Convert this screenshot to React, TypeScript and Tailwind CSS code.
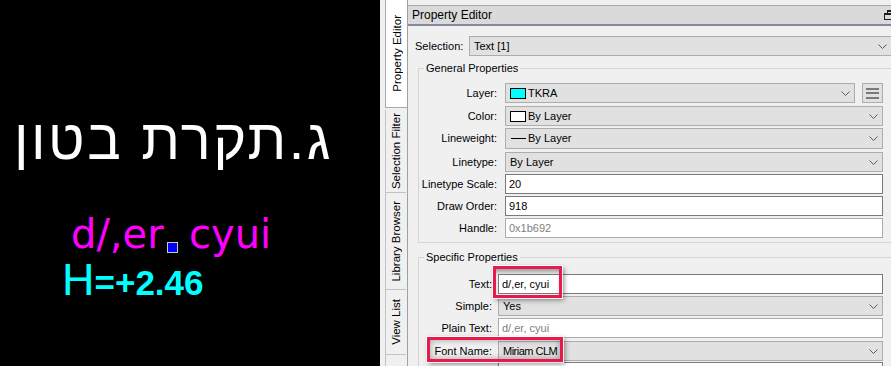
import React from 'react';

type Row = {
  label: string;
  mt: string;
  h: string;
  control: React.ReactNode;
};

function Chevron() {
  return (
    <svg width="9" height="5" viewBox="0 0 9 5" className="shrink-0">
      <polyline points="0.5,0.5 4.5,4.5 8.5,0.5" fill="none" stroke="#5a5a5a" strokeWidth="1" />
    </svg>
  );
}

function Combo({ children, className = '' }: { children: React.ReactNode; className?: string }) {
  return (
    <div className={`flex h-[20px] items-center border border-[#adadad] bg-[#e1e1e1] pl-[4px] pr-[4px] ${className}`}>
      <div className="flex min-w-0 flex-1 items-center gap-[2px] whitespace-nowrap">{children}</div>
      <Chevron />
    </div>
  );
}

function Field({ value, muted = false, className = '' }: { value?: string; muted?: boolean; className?: string }) {
  return (
    <div
      className={`flex h-[20px] items-center whitespace-nowrap border bg-white px-[3px] ${
        muted ? 'border-[#ababab] text-[#808080]' : 'border-[#7a7a7a] text-black'
      } ${className}`}
    >
      {value}
    </div>
  );
}

function Swatch({ color }: { color: string }) {
  return <span className={`h-[11px] w-[16px] shrink-0 border border-black ${color}`} />;
}

function MenuButton() {
  return (
    <div className="ml-[7px] flex h-[20px] w-[21px] flex-col items-center justify-center gap-[2.5px] border border-[#adadad] bg-[#e1e1e1]">
      <span className="h-[2px] w-[13px] bg-[#7a7a7a]" />
      <span className="h-[2px] w-[13px] bg-[#7a7a7a]" />
      <span className="h-[2px] w-[13px] bg-[#7a7a7a]" />
    </div>
  );
}

function RestoreIcon() {
  return (
    <svg width="11" height="10" viewBox="0 0 11 10" className="mr-[-4px] shrink-0">
      <rect x="3.5" y="0.5" width="7" height="5" fill="none" stroke="#1c1c1c" />
      <line x1="3.5" y1="1.5" x2="10.5" y2="1.5" stroke="#1c1c1c" />
      <rect x="0.5" y="3.5" width="7" height="6" fill="#dadada" stroke="#1c1c1c" />
      <line x1="0.5" y1="4.5" x2="7.5" y2="4.5" stroke="#1c1c1c" />
    </svg>
  );
}

const general: Row[] = [
  {
    label: 'Layer:',
    mt: 'mt-0',
    h: 'h-[20px]',
    control: (
      <div className="flex">
        <Combo className="w-[350px]">
          <Swatch color="bg-[#00ffff]" />
          <span>TKRA</span>
        </Combo>
        <MenuButton />
      </div>
    ),
  },
  {
    label: 'Color:',
    mt: 'mt-[3px]',
    h: 'h-[20px]',
    control: (
      <Combo className="w-[378px]">
        <Swatch color="bg-white" />
        <span>By Layer</span>
      </Combo>
    ),
  },
  {
    label: 'Lineweight:',
    mt: 'mt-[2px]',
    h: 'h-[21px]',
    control: (
      <Combo className="h-[21px] w-[378px]">
        <span className="ml-[1px] h-px w-[15px] bg-black" />
        <span>By Layer</span>
      </Combo>
    ),
  },
  {
    label: 'Linetype:',
    mt: 'mt-[3px]',
    h: 'h-[20px]',
    control: (
      <Combo className="w-[378px]">
        <span>By Layer</span>
      </Combo>
    ),
  },
  { label: 'Linetype Scale:', mt: 'mt-[2px]', h: 'h-[20px]', control: <Field value="20" className="w-[378px]" /> },
  { label: 'Draw Order:', mt: 'mt-[2px]', h: 'h-[20px]', control: <Field value="918" className="w-[378px]" /> },
  { label: 'Handle:', mt: 'mt-[2px]', h: 'h-[20px]', control: <Field value="0x1b692" muted className="w-[378px]" /> },
];

const specific: Row[] = [
  { label: 'Text:', mt: 'mt-0', h: 'h-[20px]', control: <Field value="d/,er, cyui" className="w-[385px]" /> },
  {
    label: 'Simple:',
    mt: 'mt-[2px]',
    h: 'h-[20px]',
    control: (
      <Combo className="w-[385px]">
        <span>Yes</span>
      </Combo>
    ),
  },
  { label: 'Plain Text:', mt: 'mt-[2px]', h: 'h-[20px]', control: <Field value="d/,er, cyui" muted className="w-[385px]" /> },
  {
    label: 'Font Name:',
    mt: 'mt-[3px]',
    h: 'h-[20px]',
    control: (
      <Combo className="w-[385px]">
        <span className="tracking-[-0.5px]">Miriam CLM</span>
      </Combo>
    ),
  },
  { label: '', mt: 'mt-px', h: 'h-[20px]', control: <Field className="w-[385px]" /> },
];

function DrawingArea() {
  return (
    <div className="relative w-[380px] shrink-0 bg-black font-['Liberation_Sans',sans-serif]">
      <div dir="rtl" className="absolute left-[14px] top-[112px] whitespace-nowrap text-[56px] leading-none tracking-[2.5px] text-white">
        ג.תקרת בטון
      </div>
      <div className="absolute left-[71px] top-[214px] whitespace-nowrap font-['DejaVu_Sans',sans-serif] text-[40px] leading-none text-[#ff00ff]">
        d/,er, cyui
      </div>
      <div className="absolute left-[167px] top-[242px] h-[11px] w-[11px] border border-[#c8c8c8] bg-[#0000ff]" />
      <div className="absolute left-[62px] top-[257px] flex items-baseline whitespace-nowrap leading-none text-[#00ffff]">
        <span className="text-[45px]">H</span>
        <span className="text-[35px] font-bold">=+2.46</span>
      </div>
    </div>
  );
}

function SideTabs() {
  const tabs = [
    { label: 'Selection Filter', h: 'h-[83px]' },
    { label: 'Library Browser', h: 'h-[97px]' },
    { label: 'View List', h: 'h-[65px]' },
  ];
  return (
    <div className="flex w-[27px] shrink-0 flex-col pl-[5px]">
      <div className="flex h-[108px] w-[22px] items-start justify-center border-b border-l border-[#a9a9a9] bg-white pt-[15px]">
        <span className="rotate-180 whitespace-nowrap text-[11.5px] leading-[14px] [writing-mode:vertical-rl]">Property Editor</span>
      </div>
      {tabs.map((t, i) => (
        <div
          key={t.label}
          className={`flex w-[21px] items-center justify-center border-b border-l border-[#c3c3c3] ${t.h} ${i === 0 ? 'mt-[2px]' : ''}`}
        >
          <span className="rotate-180 whitespace-nowrap text-[11.5px] leading-[14px] [writing-mode:vertical-rl]">{t.label}</span>
        </div>
      ))}
      <div className="w-[21px] flex-1 border-l border-[#c3c3c3]" />
    </div>
  );
}

function Group({ title, rows, labelW, gap, pt, mt }: { title: string; rows: Row[]; labelW: string; gap: string; pt: string; mt: string }) {
  return (
    <fieldset className={`ml-[10px] mr-[-40px] border border-[#d5d5d5] pb-[4px] ${pt} ${mt}`}>
      <legend className="ml-[5px] px-[2px] text-[11px] leading-[14px]">{title}</legend>
      <div className="flex flex-col">
        {rows.map((r, i) => (
          <div key={i} className={`flex items-center ${r.mt} ${r.h}`}>
            <div className={`shrink-0 text-right ${labelW}`}>{r.label}</div>
            <div className={gap}>{r.control}</div>
          </div>
        ))}
      </div>
    </fieldset>
  );
}

function PropertyEditor() {
  return (
    <div className="flex min-w-0 flex-1 flex-col overflow-hidden border-l border-[#a0a0a0] pt-[5px]">
      <div className="flex h-[21px] shrink-0 items-center justify-between border-b-2 border-t border-b-[#8686a0] border-t-[#a8a8a8] bg-[#dadada] pl-[4px] text-[12px]">
        <span>Property Editor</span>
        <RestoreIcon />
      </div>
      <div className="mt-[10px] flex h-[20px] shrink-0 items-center pl-[7px]">
        <span className="w-[54px] shrink-0">Selection:</span>
        <Combo className="w-[423px] shrink-0">
          <span>Text [1]</span>
        </Combo>
      </div>
      <Group title="General Properties" rows={general} labelW="w-[78px]" gap="ml-[8px]" pt="pt-[8px]" mt="mt-[5px]" />
      <Group title="Specific Properties" rows={specific} labelW="w-[73px]" gap="ml-[6px]" pt="pt-[10px]" mt="mt-[7px]" />
    </div>
  );
}

export default function App() {
  return (
    <div className="relative flex h-[366px] w-[891px] overflow-hidden bg-[#f0f0f0] font-['Liberation_Sans',Arial,sans-serif] text-[11px] text-black">
      <DrawingArea />
      <SideTabs />
      <PropertyEditor />
      {/* callout boxes drawn over the screenshot */}
      <div className="absolute left-[493px] top-[266px] h-[32px] w-[69px] border-[3px] border-[#e8194b] shadow-[0_0_0_1px_rgba(255,255,255,0.85),2px_2px_5px_rgba(0,0,0,0.45),inset_0_5px_4px_-2px_rgba(0,0,0,0.35)]" />
      <div className="absolute left-[427px] top-[337px] h-[25px] w-[136px] border-[3px] border-[#e8194b] shadow-[0_0_0_1px_rgba(255,255,255,0.85),2px_2px_5px_rgba(0,0,0,0.45),inset_0_0_6px_rgba(0,0,0,0.35)]" />
    </div>
  );
}
